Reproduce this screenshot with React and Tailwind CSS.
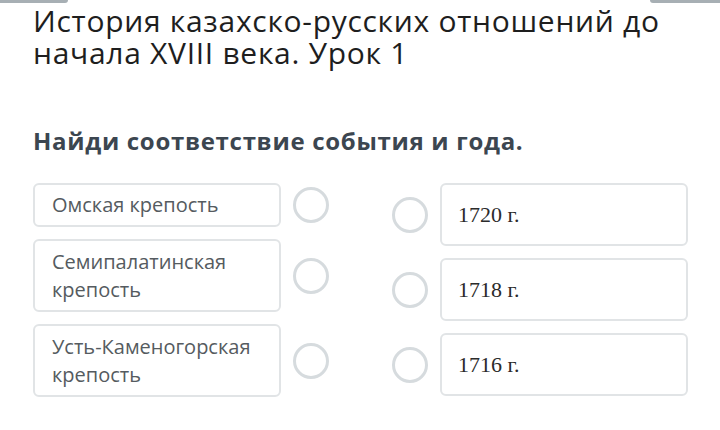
export default function App() {
  const left = ["Омская крепость", "Семипалатинская крепость", "Усть-Каменогорская крепость"];
  const right = ["1720 г.", "1718 г.", "1716 г."];
  const Circle = () => (
    <div className="w-[36px] h-[36px] rounded-full border-[3px] border-[#d6dbde] bg-white shrink-0" />
  );
  return (
    <div className="w-[720px] h-[430px] bg-white overflow-hidden relative" style={{ fontFamily: '"Open Sans", sans-serif' }}>
      <div className="flex justify-between h-[3px]">
        <div className="w-[68px] h-[3px] bg-[#a7afb4] rounded-br-full" />
        <div className="w-[70px] h-[3px] bg-[#a7afb4] rounded-bl-full" />
      </div>
      <div className="pl-[33px] pr-[10px]">
        <h1 className="text-[30px] leading-[32px] text-[#1e1e1e] tracking-[0.7px] mt-[2px]">
          История казахско-русских отношений до начала XVIII века. Урок 1
        </h1>
        <h2 className="mt-[56px] text-[24px] leading-[32px] font-bold text-[#3c4650] tracking-[0.7px]">
          Найди соответствие события и года.
        </h2>
      </div>
      <div className="flex mt-[26px] pl-[33px]">
        <div className="flex flex-col gap-[12px] w-[300px]">
          {left.map((t, i) => (
            <div key={i} className="flex items-center gap-[12px]">
              <div
                className={`w-[248px] border-2 border-[#e1e4e6] rounded-[6px] px-[17px] text-[20px] leading-[28px] text-[#555b60] ${i === 0 ? "py-[6px]" : "py-[6.5px]"}`}
              >
                {t}
              </div>
              <Circle />
            </div>
          ))}
        </div>
        <div className="flex flex-col gap-[12px] ml-[59px]">
          {right.map((t, i) => (
            <div key={i} className="flex items-center gap-[12px]">
              <Circle />
              <div
                className="w-[248px] h-[63px] border-2 border-[#e1e4e6] rounded-[6px] px-[16px] flex items-center text-[22px] text-[#2b2b2b]"
                style={{ fontFamily: '"Liberation Serif", serif' }}
              >
                {t}
              </div>
            </div>
          ))}
        </div>
      </div>
    </div>
  );
}
